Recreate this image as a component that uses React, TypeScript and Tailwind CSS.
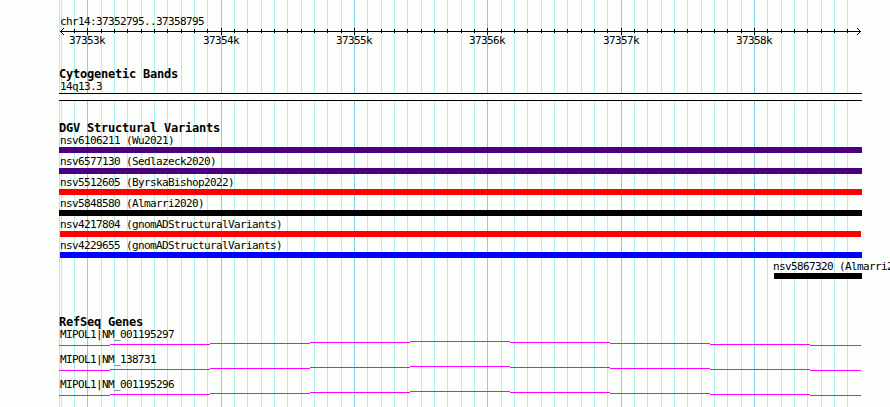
const START = 37352795;
const END = 37358795;
const LEFT = 60;
const WIDTH = 800;

const toX = (bp: number) => Math.round(LEFT + ((bp - START) * WIDTH) / (END - START));

const ticks: { x: number; bp: number; major: boolean }[] = [];
for (let bp = 37352800; bp <= END; bp += 100) {
  ticks.push({ x: toX(bp), bp, major: bp % 1000 === 0 });
}
const majorTicks = ticks.filter((tick) => tick.major);

const variants = [
  { label: 'nsv6106211 (Wu2021)', color: 'bg-[#4b0082]', span: 'ml-[59px] w-[803px]', text: 'pl-[60px]' },
  { label: 'nsv6577130 (Sedlazeck2020)', color: 'bg-[#4b0082]', span: 'ml-[59px] w-[803px]', text: 'pl-[60px]' },
  { label: 'nsv5512605 (ByrskaBishop2022)', color: 'bg-[#ff0000]', span: 'ml-[59px] w-[803px]', text: 'pl-[60px]' },
  { label: 'nsv5848580 (Almarri2020)', color: 'bg-black', span: 'ml-[59px] w-[803px]', text: 'pl-[60px]' },
  { label: 'nsv4217804 (gnomADStructuralVariants)', color: 'bg-[#ff0000]', span: 'ml-[60px] w-[801px]', text: 'pl-[60px]' },
  { label: 'nsv4229655 (gnomADStructuralVariants)', color: 'bg-[#0000ff]', span: 'ml-[60px] w-[802px]', text: 'pl-[60px]' },
  { label: 'nsv5867320 (Almarri2020)', color: 'bg-black', span: 'ml-[774px] w-[88px]', text: 'pl-[773px]' },
];

const genes = ['MIPOL1|NM_001195297', 'MIPOL1|NM_138731', 'MIPOL1|NM_001195296'];

// Introns bow up by one pixel per segment
const intron = [
  [59, 110, 4],
  [110, 210, 3],
  [210, 310, 2],
  [310, 410, 1],
  [410, 510, 0],
  [510, 610, 1],
  [610, 710, 2],
  [710, 810, 3],
  [810, 861, 4],
];

const labelText =
  'block whitespace-pre font-["DejaVu_Sans_Mono",monospace] text-[11px] leading-[13px] tracking-[-0.622px] text-black';

const TrackTitle = ({ children }: { children: string }) => (
  <h2 className='h-[13px] whitespace-pre pl-[59px] font-["DejaVu_Sans_Mono",monospace] text-[12px] font-bold leading-[13px] tracking-[-0.224px] text-black'>
    {children}
  </h2>
);

const Grid = () => (
  <svg className="absolute inset-0" width="890" height="407" shapeRendering="crispEdges">
    <rect x="59" y="0" width="1" height="407" fill="#afeeee" />
    {ticks.map(({ x, bp, major }) => (
      <rect key={bp} x={x} y="0" width="1" height="407" fill={major ? '#87ceeb' : '#afeeee'} />
    ))}
  </svg>
);

const Ruler = () => (
  <svg className="block" width="890" height="8" shapeRendering="crispEdges">
    <rect x="60" y="3" width="801" height="1" />
    {ticks.slice(1).map(({ x, bp, major }) => (
      <rect key={bp} x={x} y={major ? 0 : 1} width="1" height={major ? 7 : 4} />
    ))}
    {[1, 2, 3].map((d) => (
      <g key={d}>
        <rect x={60 + d} y={3 - d} width="1" height="1" />
        <rect x={60 + d} y={3 + d} width="1" height="1" />
        <rect x={860 - d} y={3 - d} width="1" height="1" />
        <rect x={860 - d} y={3 + d} width="1" height="1" />
      </g>
    ))}
  </svg>
);

const App = () => (
  <main className="relative h-[407px] w-[890px] overflow-hidden bg-[#fcfefc]">
    <Grid />
    <div className="relative flex flex-col pt-[15px]">
      <header>
        <span className={`${labelText} pl-[60px]`}>chr14:37352795..37358795</span>
        <Ruler />
        <div className="-mt-[2px] flex pl-[69px]">
          {majorTicks.map(({ bp, x }, i) => (
            <span
              key={bp}
              className={`${labelText} shrink-0`}
              style={{ width: (majorTicks[i + 1]?.x ?? x + 100) - x }}
            >
              {bp / 1000}k
            </span>
          ))}
        </div>
      </header>

      <section className="mt-[21px]">
        <TrackTitle>Cytogenetic Bands</TrackTitle>
        <span className={`${labelText} -mt-px pl-[60px]`}>14q13.3</span>
        <div className="ml-[59px] h-2 w-[803px] border-y border-black bg-[#fcfefc]" />
      </section>

      <section className="mt-[21px]">
        <TrackTitle>DGV Structural Variants</TrackTitle>
        <div className="-mt-px flex flex-col gap-[2px]">
          {variants.map(({ label, color, span, text }) => (
            <div key={label}>
              <span className={`${labelText} ${text}`}>{label}</span>
              <div className={`h-1.5 ${span} ${color}`} />
            </div>
          ))}
        </div>
      </section>

      <section className="mt-[37px]">
        <TrackTitle>RefSeq Genes</TrackTitle>
        <div className="-mt-px flex flex-col gap-[7px]">
          {genes.map((gene) => (
            <div key={gene}>
              <span className={`${labelText} pl-[60px]`}>{gene}</span>
              <svg className="block" width="890" height="5" shapeRendering="crispEdges">
                {intron.map(([from, to, y]) => (
                  <rect key={from} x={from} y={y} width={to - from} height="1" fill="#ff00ff" />
                ))}
              </svg>
            </div>
          ))}
        </div>
      </section>
    </div>
  </main>
);

export default App;
